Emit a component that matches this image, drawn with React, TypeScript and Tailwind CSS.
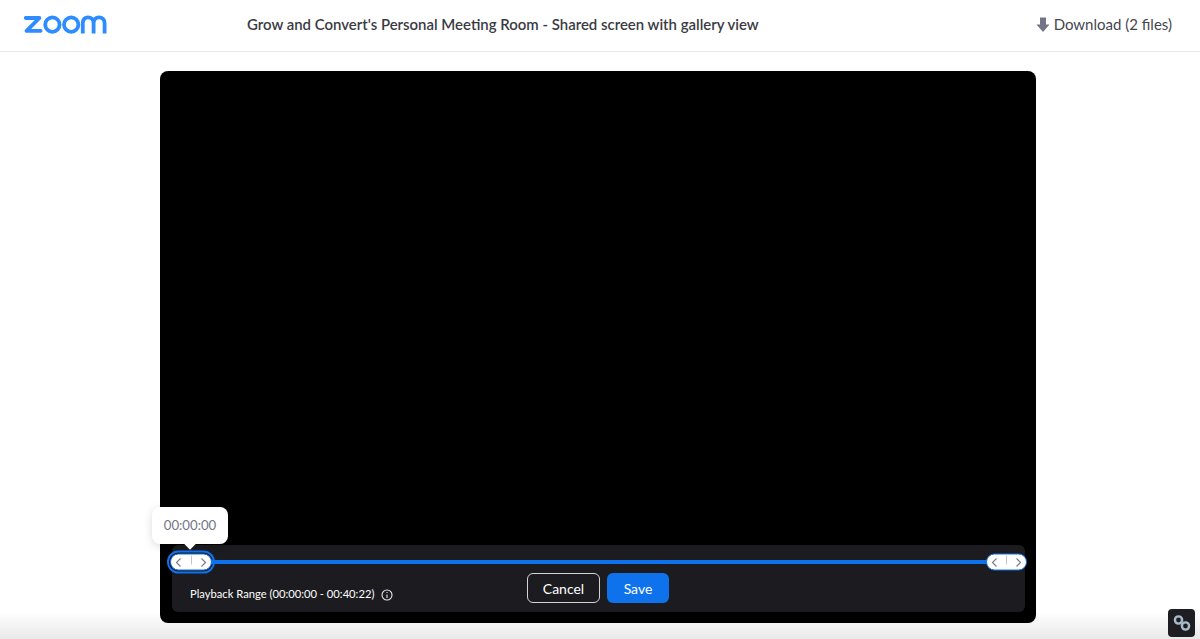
import React from "react";

function ZoomLogo() {
  return (
    <svg width="84" height="20" viewBox="0 0 84 20" fill="none" stroke="#2d8cff" strokeWidth="3.8">
      <path d="M1.8 3H15.4L2.6 15.8H16.6" strokeLinejoin="round" strokeLinecap="round" />
      <circle cx="28.4" cy="9.6" r="7.2" />
      <circle cx="47.2" cy="9.6" r="7.2" />
      <path d="M58.8 18.4V8C58.8 4.6 60.8 2.3 64 2.3C67.2 2.3 69.6 4.6 69.6 8V18.4M69.6 8C69.6 4.6 71.8 2.3 75 2.3C78.2 2.3 80.6 4.6 80.6 8V18.4" />
    </svg>
  );
}

function Handle({ active, className }: { active?: boolean; className: string }) {
  return (
    <div
      className={
        "absolute top-1/2 -translate-y-1/2 flex h-[17px] items-center justify-between rounded-full border-[1.5px] border-[#0e72ed] bg-white px-[4px] " +
        (active ? "w-[42px] outline-[2px] outline-offset-[1px] outline-[#0e72ed] " : "w-[41px] ") +
        className
      }
    >
      <svg width="7" height="10" viewBox="0 0 7 10" fill="none" stroke="#7b7b85" strokeWidth="1.1">
        <path d="M5.5 1L1.5 5L5.5 9" />
      </svg>
      <div className="h-[9px] w-px -translate-y-[2px] bg-[#c4c4c8]" />
      <svg width="7" height="10" viewBox="0 0 7 10" fill="none" stroke="#7b7b85" strokeWidth="1.1">
        <path d="M1.5 1L5.5 5L1.5 9" />
      </svg>
    </div>
  );
}

export default function App() {
  return (
    <div className="relative h-[639px] w-[1200px] overflow-hidden bg-white font-['Lato','Noto_Sans',sans-serif]">
      <div className="absolute bottom-0 left-0 right-0 h-[28px] bg-gradient-to-b from-white to-[#e9e9e9]" />

      <header className="relative flex h-[52px] items-center border-b border-[#e8e8ea] pb-[2px] pl-[24px] pr-[28px]">
        <ZoomLogo />
        <h1 className="ml-[139px] text-[14.95px] text-[#3a3a44] [font-weight:600]">
          Grow and Convert's Personal Meeting Room - Shared screen with gallery view
        </h1>
        <div className="ml-auto flex items-center gap-[4px] text-[15px] text-[#45454f]">
          <svg width="14" height="16" viewBox="0 0 14 16" fill="#747487">
            <path d="M4 0.5H10V7.5H13.5L7 15L0.5 7.5H4Z" />
          </svg>
          <span>Download (2 files)</span>
        </div>
      </header>

      <main className="relative flex justify-center pt-[19px]">
        <div className="ml-[-4px] flex h-[552px] w-[876px] flex-col justify-end rounded-[8px] bg-black pb-[11px] pl-[12px] pr-[11px]">
          <div className="relative h-[67px] rounded-[6px] bg-[#1c1c20]">
            <div className="absolute left-[-20px] top-[-38px] flex h-[37px] w-[76px] items-center justify-center rounded-[8px] bg-white text-[13.2px] text-[#747487] shadow-[0_2px_8px_rgba(0,0,0,0.15)]">
              00:00:00
              <div className="absolute bottom-[-4px] left-1/2 h-[8px] w-[8px] -translate-x-1/2 rotate-45 bg-white" />
            </div>
            <div className="absolute left-0 right-0 top-[15px] h-[4px] bg-[#0e72ed]">
              <Handle active className="left-[-2px]" />
              <Handle className="right-[-2px]" />
            </div>
            <div className="flex h-full items-end pl-[18px]">
              <div className="mb-[9px] flex items-center gap-[7px] text-[11.2px] text-white">
                <span>Playback Range (00:00:00 - 00:40:22)</span>
                <svg width="12" height="12" viewBox="0 0 12 12" fill="none" stroke="#e8e8ea" strokeWidth="1.1">
                  <circle cx="6" cy="6" r="5" />
                  <path d="M6 5.4V9M6 3V4" />
                </svg>
              </div>
            </div>
            <div className="absolute left-[355px] top-[28px] flex gap-[7px] text-[14px] text-white">
              <div className="flex h-[30px] w-[73px] items-center justify-center rounded-[6px] border border-[#d4d4d8]">Cancel</div>
              <div className="flex h-[30px] w-[62px] items-center justify-center rounded-[6px] bg-[#0e72ed]">Save</div>
            </div>
          </div>
        </div>
      </main>

      <div className="absolute bottom-[2px] right-[5px] flex h-[28px] w-[27px] items-center justify-center rounded-[4px] bg-[#1e1e22]">
        <svg width="20" height="20" viewBox="0 0 20 20" fill="none" stroke="#a9bccb" strokeWidth="2.4">
          <circle cx="6.5" cy="7" r="3.6" />
          <circle cx="13.5" cy="13" r="3.6" />
        </svg>
      </div>
    </div>
  );
}
